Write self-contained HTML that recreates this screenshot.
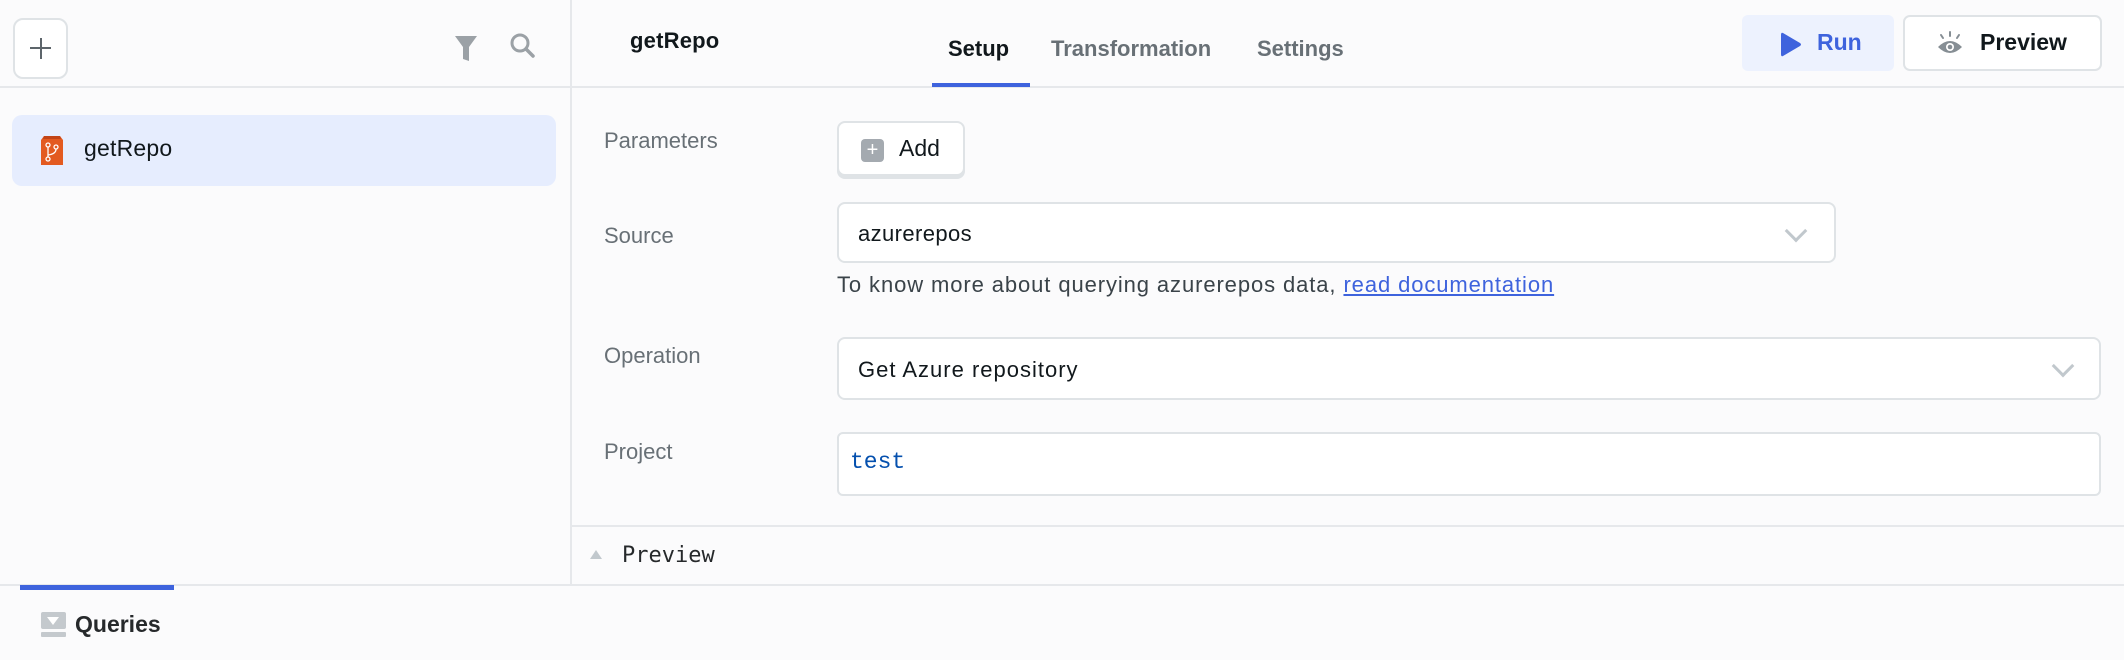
<!DOCTYPE html>
<html><head><meta charset="utf-8"><style>
*{box-sizing:border-box;margin:0;padding:0}
body{width:2124px;height:660px;background:#fbfbfc;font-family:"Liberation Sans",sans-serif;color:#11181c;position:relative;overflow:hidden}
.a{position:absolute}
.lbl{position:absolute;left:604px;font-size:22px;color:#687076}
.box{position:absolute;background:#fff;border:2px solid #dfe3e6;border-radius:8px}
.chev{position:absolute;width:16px;height:16px;border-right:3px solid #c1c8cd;border-bottom:3px solid #c1c8cd;transform:rotate(45deg)}
</style></head><body>
<div class="a" style="left:570px;top:0;width:2px;height:584px;background:#e6e8eb"></div>
<div class="a" style="left:0;top:86px;width:2124px;height:2px;background:#e6e8eb"></div>
<div class="a" style="left:13px;top:18px;width:55px;height:61px;border:2px solid #dfe3e6;border-radius:10px;background:#fff"></div>
<div class="a" style="left:30px;top:47px;width:21px;height:2px;background:#5d656b"></div>
<div class="a" style="left:39.5px;top:38px;width:2px;height:21px;background:#5d656b"></div>
<svg class="a" style="left:454px;top:35px" width="24" height="27" viewBox="0 0 24 27"><path d="M1 1H23L15 12V26L9 24V12Z" fill="#9ba1a6"/></svg>
<svg class="a" style="left:510px;top:33px" width="26" height="26" viewBox="0 0 26 26"><circle cx="10" cy="10" r="8" fill="none" stroke="#9ba1a6" stroke-width="3"/><path d="M16 16L23 23" stroke="#9ba1a6" stroke-width="3.5" stroke-linecap="round"/></svg>
<div class="a" style="left:12px;top:115px;width:544px;height:71px;background:#e6edfe;border-radius:10px"></div>
<svg class="a" style="left:41px;top:136px" width="22" height="29" viewBox="0 0 22 29"><path d="M3 0H19L22 4V29H0V4Z" fill="#e35a20"/><path d="M3 0H19L20 3H2Z" fill="#c24417"/><circle cx="7" cy="9" r="2" fill="none" stroke="#fff" stroke-width="1.3"/><circle cx="7" cy="23" r="2" fill="none" stroke="#fff" stroke-width="1.3"/><circle cx="15" cy="11" r="2" fill="none" stroke="#fff" stroke-width="1.3"/><path d="M7 11V21M15 13Q15 18 7 19" fill="none" stroke="#fff" stroke-width="1.3"/></svg>
<div class="a" style="left:84px;top:123px;font-size:23px;line-height:50px;color:#11181c;letter-spacing:0.2px">getRepo</div>
<div class="a" style="left:630px;top:28px;font-size:22px;font-weight:bold;color:#11181c;letter-spacing:0.2px">getRepo</div>
<div class="a" style="left:948px;top:36px;font-size:22px;font-weight:bold;color:#11181c">Setup</div>
<div class="a" style="left:1051px;top:36px;font-size:22px;font-weight:bold;color:#687076">Transformation</div>
<div class="a" style="left:1257px;top:36px;font-size:22px;font-weight:bold;color:#687076">Settings</div>
<div class="a" style="left:932px;top:83px;width:98px;height:4px;background:#3e63dd"></div>
<div class="a" style="left:1742px;top:15px;width:152px;height:56px;background:#edf2fe;border-radius:6px"></div>
<svg class="a" style="left:1780px;top:31px" width="22" height="27" viewBox="0 0 22 27"><path d="M3 2Q1 1 1 4V23Q1 26 3 25L20 15Q22 13.5 20 12Z" fill="#3e63dd"/></svg>
<div class="a" style="left:1817px;top:29px;font-size:23px;font-weight:bold;color:#3e63dd">Run</div>
<div class="a" style="left:1903px;top:15px;width:199px;height:56px;background:#fff;border:2px solid #dfe3e6;border-radius:7px"></div>
<svg class="a" style="left:1937px;top:30px" width="26" height="26" viewBox="0 0 26 26"><path d="M1 17Q13 5 25 17Q13 29 1 17Z" fill="#868e94"/><circle cx="13" cy="17" r="4" fill="#fff"/><circle cx="13" cy="17" r="2.3" fill="#868e94"/><path d="M13 2V6M4 5L6 8M22 5L20 8" stroke="#868e94" stroke-width="2" stroke-linecap="round"/></svg>
<div class="a" style="left:1980px;top:29px;font-size:23px;font-weight:bold;color:#11181c">Preview</div>
<div class="lbl" style="top:128px">Parameters</div>
<div class="lbl" style="top:223px">Source</div>
<div class="lbl" style="top:343px">Operation</div>
<div class="lbl" style="top:439px">Project</div>
<div class="box" style="left:837px;top:121px;width:128px;height:55px;box-shadow:0 3px 0 #dfe3e6"></div>
<div class="a" style="left:861px;top:139px;width:23px;height:23px;background:#a4aab0;border-radius:4px;color:#fff;font-size:20px;line-height:23px;text-align:center">+</div>
<div class="a" style="left:899px;top:135px;font-size:23px;color:#11181c">Add</div>
<div class="box" style="left:837px;top:202px;width:999px;height:61px"></div>
<div class="a" style="left:858px;top:221px;font-size:22px;color:#11181c;letter-spacing:0.4px">azurerepos</div>
<div class="chev" style="left:1788px;top:223px"></div>
<div class="a" style="left:837px;top:272px;font-size:22px;color:#3a4349;letter-spacing:0.9px;white-space:nowrap">To know more about querying azurerepos data, <span style="color:#3e63dd;text-decoration:underline">read documentation</span></div>
<div class="box" style="left:837px;top:337px;width:1264px;height:63px"></div>
<div class="a" style="left:858px;top:357px;font-size:22px;color:#11181c;letter-spacing:1px">Get Azure repository</div>
<div class="chev" style="left:2055px;top:358px"></div>
<div class="box" style="left:837px;top:432px;width:1264px;height:64px;border-radius:6px"></div>
<div class="a" style="left:850px;top:449px;font-family:'Liberation Mono',monospace;font-size:23px;color:#0550ae">test</div>
<div class="a" style="left:572px;top:525px;width:1552px;height:2px;background:#e6e8eb"></div>
<div class="a" style="left:590px;top:550px;width:0;height:0;border-left:6px solid transparent;border-right:6px solid transparent;border-bottom:9px solid #c1c8cd"></div>
<div class="a" style="left:622px;top:543px;font-family:'DejaVu Sans Mono','Liberation Mono',monospace;font-size:22px;color:#26292b">Preview</div>
<div class="a" style="left:0;top:584px;width:2124px;height:2px;background:#e6e8eb"></div>
<div class="a" style="left:20px;top:585px;width:154px;height:5px;background:#3e63dd"></div>
<div class="a" style="left:41px;top:612px;width:25px;height:17px;background:#c4c9cd;border-radius:2px"></div>
<div class="a" style="left:47px;top:617px;width:0;height:0;border-left:6px solid transparent;border-right:6px solid transparent;border-top:8px solid #fff"></div>
<div class="a" style="left:41px;top:632px;width:25px;height:5px;background:#c4c9cd;border-radius:1px"></div>
<div class="a" style="left:75px;top:611px;font-size:23px;font-weight:bold;color:#26292b">Queries</div>
</body></html>
